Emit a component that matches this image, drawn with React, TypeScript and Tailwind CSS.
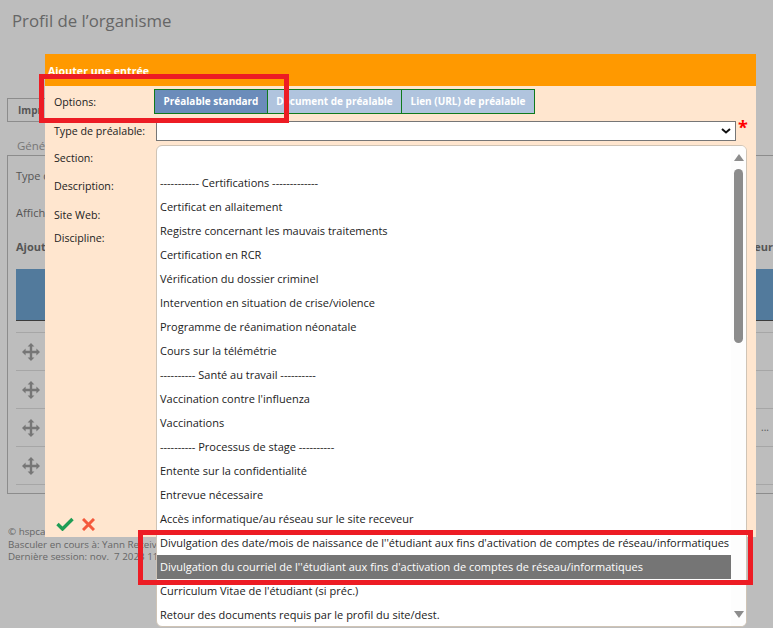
const OPTIONS = [
  '',
  '----------- Certifications -------------',
  'Certificat en allaitement',
  'Registre concernant les mauvais traitements',
  'Certification en RCR',
  'Vérification du dossier criminel',
  'Intervention en situation de crise/violence',
  'Programme de réanimation néonatale',
  'Cours sur la télémétrie',
  '---------- Santé au travail ----------',
  "Vaccination contre l'influenza",
  'Vaccinations',
  '---------- Processus de stage ----------',
  'Entente sur la confidentialité',
  'Entrevue nécessaire',
  'Accès informatique/au réseau sur le site receveur',
  "Divulgation des date/mois de naissance de l''étudiant aux fins d'activation de comptes de réseau/informatiques",
  "Divulgation du courriel de l''étudiant aux fins d'activation de comptes de réseau/informatiques",
  "Curriculum Vitae de l'étudiant (si préc.)",
  'Retour des documents requis par le profil du site/dest.',
]

const SELECTED = 17

function MoveIcon() {
  return (
    <svg width="18" height="18" viewBox="0 0 18 18" className="text-[#767676]" fill="currentColor">
      <path d="M9 0l3.4 3.6H10.2V7.8H14.4V5.6L18 9l-3.6 3.4V10.2H10.2V14.4H12.4L9 18l-3.4-3.6H7.8V10.2H3.6V12.4L0 9l3.6-3.4V7.8H7.8V3.6H5.6z" />
    </svg>
  )
}

function Background() {
  return (
    <div className="flex flex-col h-[628px] overflow-hidden text-[#555]">
      <h1 className="pl-3 pt-[9px] h-[98px] text-[16.8px] leading-6 text-[#666]">Profil de l’organisme</h1>
      <div className="ml-[7px] w-[60px] h-[24px] border border-[#8c8c8c] pl-[10px] text-[10px] leading-[22px] font-bold">Impr</div>
      <div className="pl-[17px] pt-[16px] h-[33px] text-[11.5px] leading-4 text-[#777]">Géné</div>
      <div className="ml-[7px] h-[339px] border border-[#8c8c8c] border-r-0 pl-[8px] pt-[12px] text-[11px]">
        <div className="h-[37px] leading-4">Type d</div>
        <div className="h-[34px] leading-4">Affich</div>
        <div className="flex justify-between h-[30px] leading-4 font-bold">
          <span>Ajout</span>
          <span>eur</span>
        </div>
        <div className="h-[52px] bg-[#527a9c] border-b border-[#3c3c3c]" />
        <div className="h-[12px] border-b border-[#a6a6a6]" />
        {[0, 1, 2, 3].map((i) => (
          <div key={i} className="flex items-center justify-between h-[38px] pl-[6px] pr-1 border-b border-[#a6a6a6]">
            <MoveIcon />
            {i === 2 && <span className="text-[10px]">...</span>}
          </div>
        ))}
      </div>
      <div className="pl-[8px] pt-[32px] text-[9.8px] leading-[12.5px] text-[#666] whitespace-pre">
        <div>© hspcanada.net</div>
        <div>Basculer en cours à: Yann Receiving</div>
        <div>Dernière session: nov.  7 2023 11:00</div>
      </div>
    </div>
  )
}

function Field({ label, className }: { label: string; className: string }) {
  return <div className={`pl-[9px] text-[10.67px] leading-4 text-[#222] whitespace-nowrap ${className}`}>{label}</div>
}

export default function App() {
  return (
    <div className="relative w-[773px] h-[628px] overflow-hidden bg-[#bdbdbd] [font-family:'Open_Sans',sans-serif]">
      <Background />

      {/* Modal */}
      <div className="absolute left-[45px] top-[54px] w-[711px] h-[483px] bg-[#ffe6cf]">
        <div className="h-[32px] bg-[#ff9900] pl-[3px] pt-[9px] text-[10.67px] leading-4 font-bold text-white">Ajouter une entrée</div>
        <div className="flex pt-[3px] h-[35px]">
          <div className="w-[109px] pl-[9px] pt-[5px] text-[10.67px] leading-4 text-[#222]">Options:</div>
          <div className="flex h-[25px] border border-[#0f7a1c] text-[10px] leading-[23px] font-bold text-white">
            <div className="w-[113px] text-center bg-[#6b8cba] border-r border-[#0f7a1c]">Préalable standard</div>
            <div className="w-[134px] text-center bg-[#b0c4de] border-r border-[#0f7a1c]">Document de préalable</div>
            <div className="w-[132px] text-center bg-[#b0c4de]">Lien (URL) de préalable</div>
          </div>
        </div>
        <div className="flex h-[22px]">
          <Field label="Type de préalable:" className="w-[111px] pt-[2px]" />
          <div className="flex justify-end items-center w-[580px] h-[20px] bg-white border border-[#767676] pr-[4px]">
            <svg width="10" height="6" viewBox="0 0 10 6" fill="none" stroke="#111" strokeWidth="2">
              <path d="M1 1l4 3.5L9 1" />
            </svg>
          </div>
          <span className="ml-[2px] -mt-[6px] text-[18px] leading-6 font-bold text-[#ff0000]">*</span>
        </div>
        <Field label="Section:" className="pt-[7px] h-[32px]" />
        <Field label="Description:" className="pt-[3px] h-[30px]" />
        <Field label="Site Web:" className="pt-[2px] h-[25px]" />
        <Field label="Discipline:" className="h-[16px]" />
        <div className="flex items-center gap-[8px] pl-[11px] mt-[271px]">
          <svg width="18" height="14" viewBox="0 0 18 14" fill="none" stroke="#1f9d55" strokeWidth="3.4">
            <path d="M1.5 7l5 5L16.5 2" />
          </svg>
          <svg width="13" height="13" viewBox="0 0 13 13" fill="none" stroke="#f4593b" strokeWidth="3">
            <path d="M1 1l11 11M12 1L1 12" />
          </svg>
        </div>
      </div>

      {/* Open dropdown */}
      <div className="absolute left-[156px] top-[145px] w-[591px] h-[482px] bg-white border border-[#cfc4b6] rounded-[6px] overflow-hidden text-[11px] leading-6 text-[#222]">
        <div className="pr-[15px] pt-[1px]">
          {OPTIONS.map((option, i) => (
            <div
              key={i}
              className={`h-6 pl-[3px] whitespace-nowrap ${i === SELECTED ? 'bg-[#757575] text-white' : ''}`}
            >
              {option}
            </div>
          ))}
        </div>
        <div className="absolute right-0 top-0 bottom-0 w-[15px] flex flex-col items-center pt-[8px] pb-[8px] bg-[#fdfdfd]">
          <svg width="10" height="7" viewBox="0 0 10 7" fill="#8c8c8c"><path d="M5 0l5 7H0z" /></svg>
          <div className="w-[9px] h-[174px] mt-[8px] rounded-[5px] bg-[#8c8c8c]" />
          <div className="flex-1" />
          <svg width="10" height="7" viewBox="0 0 10 7" fill="#8c8c8c"><path d="M5 7L0 0h10z" /></svg>
        </div>
      </div>

      {/* Annotations */}
      <div className="absolute left-[39px] top-[74px] w-[250px] h-[49px] border-[5px] border-[#ed1c24]" />
      <div className="absolute left-[138px] top-[530px] w-[615px] h-[55px] border-[5px] border-[#ed1c24]" />
    </div>
  )
}
